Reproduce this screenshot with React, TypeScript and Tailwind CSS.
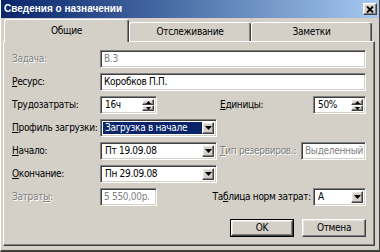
import type { ReactNode } from "react";

const sunken =
  "border border-t-[#808080] border-l-[#808080] border-r-white border-b-white shadow-[inset_1px_1px_0_#404040,inset_-1px_-1px_0_#d4d0c8]";
const raised =
  "border border-t-white border-l-white border-r-[#404040] border-b-[#404040] shadow-[inset_-1px_-1px_0_#808080,inset_1px_1px_0_#e8e6e1] bg-[#d4d0c8]";

function Label({ children, disabled, className = "" }: { children: ReactNode; disabled?: boolean; className?: string }) {
  return (
    <span
      className={`whitespace-nowrap ${disabled ? "text-[#808080] [text-shadow:1px_1px_0_#ffffff]" : "text-black"} ${className}`}
    >
      {children}
    </span>
  );
}

function Field({ value, disabled, className = "" }: { value: string; disabled?: boolean; className?: string }) {
  return (
    <div className={`h-[18px] bg-white flex items-center pl-[3px] overflow-hidden whitespace-nowrap ${sunken} ${className}`}>
      <span className={disabled ? "text-[#808080]" : "text-black"}>{value}</span>
    </div>
  );
}

function Arrow() {
  return (
    <svg width="7" height="4" viewBox="0 0 7 4">
      <path d="M0 0h7L3.5 4z" fill="#000" />
    </svg>
  );
}

function Combo({ value, selected, className = "" }: { value: string; selected?: boolean; className?: string }) {
  return (
    <div className={`h-[18px] bg-white flex p-[2px] whitespace-nowrap ${sunken} ${className}`}>
      <div className={`flex-1 flex items-center pl-[2px] ${selected ? "bg-[#0a246a] text-white" : "text-black"}`}>
        {value}
      </div>
      <div className={`w-[12px] flex items-center justify-center ${raised}`}>
        <Arrow />
      </div>
    </div>
  );
}

function Spin({ value, className = "" }: { value: string; className?: string }) {
  return (
    <div className={`h-[18px] bg-white flex p-[2px] whitespace-nowrap ${sunken} ${className}`}>
      <div className="flex-1 flex items-center pl-[2px] text-black">{value}</div>
      <div className="w-[12px] flex flex-col">
        <div className={`flex-1 flex items-center justify-center ${raised}`}>
          <svg width="5" height="3" viewBox="0 0 5 3">
            <path d="M2.5 0L5 3H0z" fill="#000" />
          </svg>
        </div>
        <div className={`flex-1 flex items-center justify-center ${raised}`}>
          <svg width="5" height="3" viewBox="0 0 5 3">
            <path d="M0 0h5L2.5 3z" fill="#000" />
          </svg>
        </div>
      </div>
    </div>
  );
}

function Tab({ label, active, className = "" }: { label: string; active?: boolean; className?: string }) {
  return (
    <div
      className={`flex items-center justify-center rounded-t-[3px] border-t border-l border-t-white border-l-white border-r border-r-[#404040] shadow-[inset_-1px_0_0_#808080] bg-[#d4d0c8] ${
        active ? "h-[23px] -mb-px relative z-10" : "h-[19px]"
      } ${className}`}
    >
      {label}
    </div>
  );
}

export default function App() {
  return (
    <div className="w-[380px] h-[252px] bg-[#d4d0c8] flex flex-col border-l border-l-white border-r border-r-[#404040] border-b-2 border-b-[#404040] font-['DejaVu_Sans_Condensed','Liberation_Sans',Arial,sans-serif] text-[10px] tracking-[-0.3px] leading-none text-black">
      {/* title bar */}
      <div className="h-[18px] flex items-center justify-between bg-linear-to-r from-[#0a246a] to-[#a6caf0]">
        <span className="pl-[3px] text-white font-bold text-[10px] tracking-normal font-['Liberation_Sans',Arial,sans-serif]">
          Сведения о назначении
        </span>
        <div className={`w-[14px] h-[12px] mr-[2px] flex items-center justify-center ${raised}`}>
          <svg width="8" height="7" viewBox="0 0 8 7">
            <path d="M1 0.5l6 6M7 0.5l-6 6" stroke="#000" strokeWidth="1.8" />
          </svg>
        </div>
      </div>

      {/* tabs */}
      <div className="mt-px h-[22px] flex items-end pl-[3px]">
        <Tab label="Общие" active className="w-[125px]" />
        <Tab label="Отслеживание" className="w-[122px]" />
        <Tab label="Заметки" className="w-[121px]" />
      </div>

      {/* panel */}
      <div className="ml-[2px] w-[372px] h-[205px] border border-t-white border-l-white border-r-[#404040] border-b-[#404040] shadow-[inset_-1px_-1px_0_#808080] pt-[8px] pl-[8px] pr-[8px] flex flex-col">
        <div className="flex flex-col gap-[5px]">
          <div className="flex items-center">
            <Label disabled className="w-[88px]">Задача:</Label>
            <Field value="В.3" disabled className="flex-1" />
          </div>
          <div className="flex items-center">
            <Label className="w-[88px]">
              <span className="underline">Р</span>есурс:
            </Label>
            <Field value="Коробков П.П." className="flex-1" />
          </div>
          <div className="flex items-center">
            <Label className="w-[88px]">Трудозатраты:</Label>
            <Spin value="16ч" className="w-[57px]" />
            <Label className="ml-[63px] flex-1">
              <span className="underline">Е</span>диницы:
            </Label>
            <Spin value="50%" className="w-[53px]" />
          </div>
          <div className="flex items-center">
            <Label className="w-[88px]">
              <span className="underline">П</span>рофиль загрузки:
            </Label>
            <Combo value="Загрузка в начале" selected className="w-[117px]" />
          </div>
          <div className="flex items-center">
            <Label className="w-[88px]">
              <span className="underline">Н</span>ачало:
            </Label>
            <Combo value="Пт 19.09.08" className="w-[117px]" />
            <Label disabled className="ml-[3px] flex-1">
              <span className="underline">Т</span>ип резервиров.:
            </Label>
            <Field value="Выделенный" disabled className="w-[65px]" />
          </div>
          <div className="flex items-center">
            <Label className="w-[88px]">
              <span className="underline">О</span>кончание:
            </Label>
            <Combo value="Пн 29.09.08" className="w-[117px]" />
          </div>
          <div className="flex items-center">
            <Label disabled className="w-[88px]">
              Затрат<span className="underline">ы</span>:
            </Label>
            <Field value="5 550,00р." disabled className="w-[57px]" />
            <Label className="ml-auto mr-[2px]">
              Та<span className="underline">б</span>лица норм затрат:
            </Label>
            <Combo value="А" className="w-[53px]" />
          </div>
        </div>

        <div className="mt-[13px] flex justify-end gap-[8px]">
          <div className="w-[64px] h-[18px] border border-black">
            <div className={`w-full h-full flex items-center justify-center ${raised}`}>OK</div>
          </div>
          <div className={`w-[64px] h-[18px] flex items-center justify-center ${raised}`}>Отмена</div>
        </div>
      </div>
    </div>
  );
}
